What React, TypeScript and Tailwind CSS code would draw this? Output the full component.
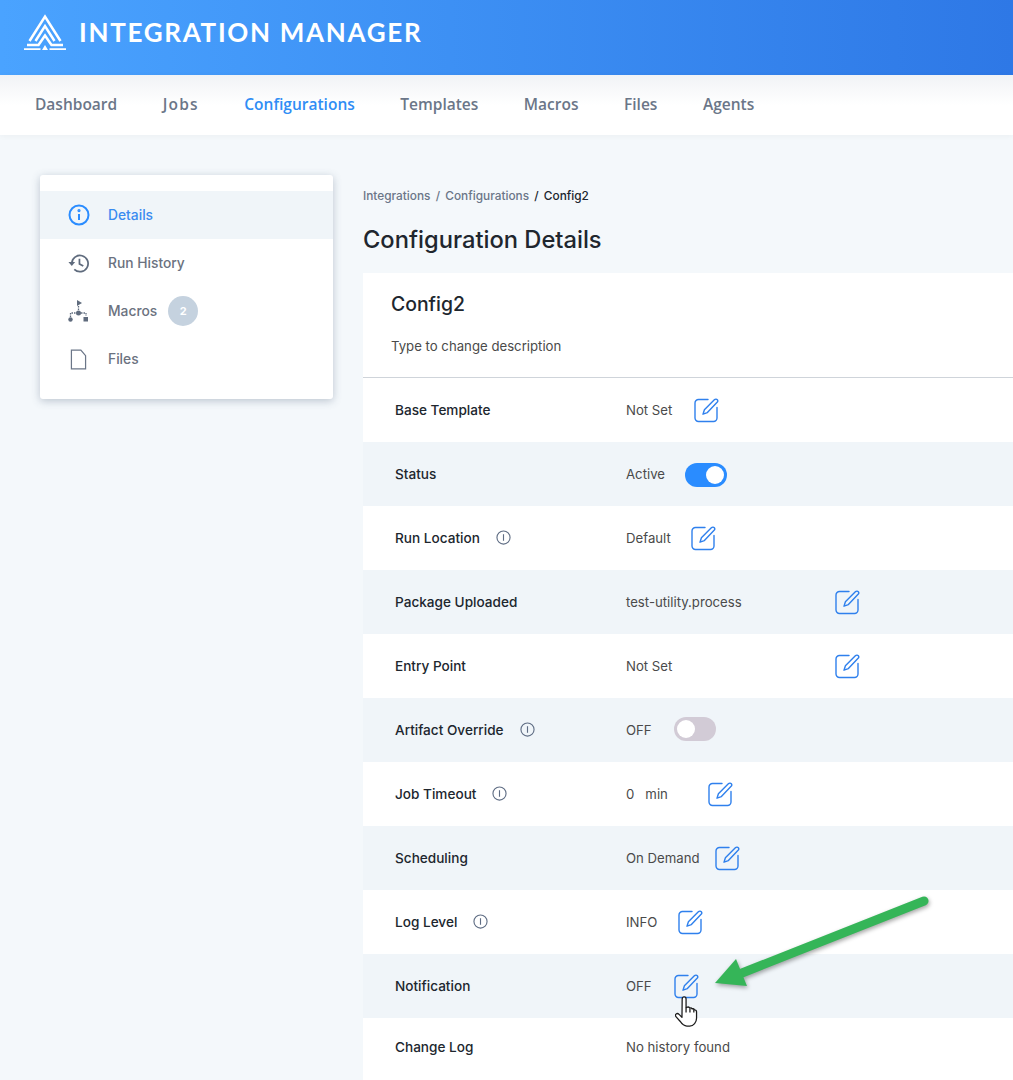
import { ReactNode } from 'react';

const EditIcon = ({ className = '' }: { className?: string }) => (
  <button className={`block w-[25px] h-[25px] shrink-0 ${className}`} aria-label="Edit">
    <svg viewBox="0 0 25 25" width="25" height="25" fill="none" stroke="#2f80ed" strokeWidth="1.4" strokeLinejoin="round" strokeLinecap="round">
      <path d="M14 1.5H4.5a3.5 3.5 0 0 0-3.5 3.5v15a3.5 3.5 0 0 0 3.5 3.5h15a3.5 3.5 0 0 0 3.5-3.5V9.5" />
      <path d="M20.6 1.6c.8-.7 2-.6 2.7.2.6.7.5 1.8-.2 2.5L13.4 14.6 9 16.2l1.4-4.4z" />
    </svg>
  </button>
);

const InfoDot = () => (
  <svg viewBox="0 0 16 16" width="15" height="15" fill="none" stroke="#5f6d84" strokeWidth="1.2" className="ml-[16px] shrink-0">
    <circle cx="8" cy="8" r="7" />
    <path d="M8 4.5v7" />
  </svg>
);

const Toggle = ({ on, className = '' }: { on: boolean; className?: string }) => (
  <div className={`w-[42px] h-6 rounded-full p-[3px] flex ${on ? 'bg-[#2a8cff] justify-end' : 'bg-[#d2cbd6] justify-start'} ${className}`}>
    <div className="w-[18px] h-[18px] rounded-full bg-white" />
  </div>
);

const Row = ({ label, info, shaded, h = 'h-16', children }: { label: string; info?: boolean; shaded?: boolean; h?: string; children: ReactNode }) => (
  <div className={`${h} flex items-center pl-8 ${shaded ? 'bg-[#f0f5f9]' : 'bg-white'}`}>
    <div className="w-[231px] shrink-0 flex items-center text-[13.6px] font-medium text-[#20262e]">
      {label}
      {info && <InfoDot />}
    </div>
    <div className="mt-[2px] flex items-center text-[13.2px] text-[#4a4a4a]">{children}</div>
  </div>
);

const SideItem = ({ icon, label, active, badge }: { icon: ReactNode; label: string; active?: boolean; badge?: string }) => (
  <div className={`h-12 flex items-center pl-[27px] ${active ? 'bg-[#f0f5f9]' : ''}`}>
    <div className="w-[23px] h-6 flex items-center justify-center shrink-0">{icon}</div>
    <span className={`ml-[18px] text-[13.8px] font-medium ${active ? 'text-[#3a8bf0]' : 'text-[#6b7280]'}`}>{label}</span>
    {badge && (
      <span className="ml-[11px] w-[30px] h-[30px] rounded-full bg-[#c5d2df] text-white text-[11px] font-bold flex items-center justify-center">{badge}</span>
    )}
  </div>
);

export default function App() {
  const nav = ['Dashboard', 'Jobs', 'Configurations', 'Templates', 'Macros', 'Files', 'Agents'];

  return (
    <div className="relative w-[1013px] h-[1080px] overflow-hidden bg-[#f4f8fb] font-['Inter','Noto_Sans',sans-serif]">
      {/* header */}
      <header className="h-[75px] flex items-start pt-[14px] pl-6 bg-gradient-to-r from-[#4aa3ff] to-[#2e78e6]">
        <svg viewBox="0 0 42 36" width="42" height="36" fill="none" stroke="#fff" strokeWidth="2.5" className="shrink-0">
          <path d="M5.5 27L21 2.5 36.5 27" />
          <path d="M11.5 27L21 12l9.5 15" />
          <path d="M3 31h11.5L21 21.5 27.5 31H39" />
          <path d="M0 35.5h16.5" />
          <path d="M25.5 35.5H42" />
          <path d="M18 36l3-5 3 5z" fill="#fff" stroke="none" />
        </svg>
        <div className="ml-[13px] mt-[4px] text-[26px] font-bold tracking-[1.7px] text-white font-['Lato',sans-serif] leading-7">INTEGRATION MANAGER</div>
      </header>

      {/* nav */}
      <nav className="h-[60px] flex items-center gap-[45.5px] pl-[35px] bg-gradient-to-b from-[#f1f3f6] to-white to-50% shadow-[0_1px_6px_rgba(0,0,0,0.04)]">
        {nav.map(item => (
          <span key={item} className={`text-[15.5px] font-semibold font-['Open_Sans',sans-serif] ${item === 'Configurations' ? 'text-[#2f8df5]' : 'text-[#6b7688]'} ${item === 'Jobs' ? 'tracking-[1.2px]' : ''}`}>{item}</span>
        ))}
      </nav>

      <div className="flex items-start pt-10 pl-10">
        {/* sidebar */}
        <aside className="w-[293px] h-[224px] py-4 bg-white rounded-[3px] shadow-[0_2px_8px_rgba(60,80,110,0.3)] shrink-0">
          <SideItem
            active
            label="Details"
            icon={
              <svg viewBox="0 0 22 22" width="22" height="22" fill="none" stroke="#2a8cff" strokeWidth="2">
                <circle cx="11" cy="11" r="9.5" />
                <path d="M11 10v6" />
                <circle cx="11" cy="6.6" r=".6" fill="#2a8cff" />
              </svg>
            }
          />
          <SideItem
            label="Run History"
            icon={
              <svg viewBox="0 0 24 24" width="23" height="23" fill="none" stroke="#5f6b7d" strokeWidth="1.8">
                <path d="M5 12a8.5 8.5 0 1 1 2.6 6.2" />
                <path d="M1.5 10.5h7L5 14.5z" fill="#5f6b7d" stroke="none" />
                <path d="M13 7v5.5l4 2.2" />
              </svg>
            }
          />
          <SideItem
            label="Macros"
            badge="2"
            icon={
              <svg viewBox="0 0 22 22" width="22" height="22" fill="#5f6b7d">
                <path d="M9 0l5 3-5 3z" />
                <circle cx="10.5" cy="13" r="2.5" />
                <circle cx="2.5" cy="19.5" r="2.2" />
                <rect x="15.5" y="17" width="4.5" height="4.5" />
                <path d="M10.5 6v4M2.5 17v-4H8M13 13h5v3" stroke="#5f6b7d" strokeWidth="1.3" strokeDasharray="1.5 1" fill="none" />
              </svg>
            }
          />
          <SideItem
            label="Files"
            icon={
              <svg viewBox="0 0 18 22" width="17" height="21" fill="none" stroke="#6b7688" strokeWidth="1.3">
                <path d="M1.5 1h10l5 6v14h-15z" />
              </svg>
            }
          />
        </aside>

        {/* main */}
        <main className="ml-[30px] w-[650px] shrink-0">
          <div className="mt-[13px] text-[11.85px] font-medium text-[#6b7688]">
            Integrations <span className="mx-[2px]">/</span> Configurations <span className="mx-[2px] text-[#20262e]">/</span> <span className="text-[#20262e]">Config2</span>
          </div>
          <h1 className="mt-[20px] text-[23.7px] leading-7 font-medium text-[#20262e]">Configuration Details</h1>

          <section className="mt-[19px] pb-[10px] bg-white">
            <div className="h-[105px] pl-7 pt-[19px] border-b border-[#cfd4da]">
              <div className="text-[19.4px] leading-6 font-medium text-[#20262e]">Config2</div>
              <div className="mt-[21px] text-[13.2px] text-[#4a4a4a]">Type to change description</div>
            </div>
            <Row label="Base Template">
              <span>Not Set</span>
              <EditIcon className="ml-[22px]" />
            </Row>
            <Row label="Status" shaded>
              <span>Active</span>
              <Toggle on className="ml-[20px]" />
            </Row>
            <Row label="Run Location" info>
              <span>Default</span>
              <EditIcon className="ml-[20px]" />
            </Row>
            <Row label="Package Uploaded" shaded>
              <span className="w-[209px]">test-utility.process</span>
              <EditIcon />
            </Row>
            <Row label="Entry Point">
              <span className="w-[209px]">Not Set</span>
              <EditIcon />
            </Row>
            <Row label="Artifact Override" info shaded>
              <span>OFF</span>
              <Toggle on={false} className="ml-[22px] -mt-[4px]" />
            </Row>
            <Row label="Job Timeout" info>
              <span>0</span>
              <span className="ml-[11px]">min</span>
              <EditIcon className="ml-[40px]" />
            </Row>
            <Row label="Scheduling" shaded>
              <span>On Demand</span>
              <EditIcon className="ml-[15px]" />
            </Row>
            <Row label="Log Level" info>
              <span>INFO</span>
              <EditIcon className="ml-[21px]" />
            </Row>
            <Row label="Notification" shaded>
              <span>OFF</span>
              <EditIcon className="ml-[22px]" />
            </Row>
            <Row label="Change Log" h="h-[58px]">
              <span>No history found</span>
            </Row>
          </section>
        </main>
      </div>

      {/* annotation arrow */}
      <svg className="absolute left-[700px] top-[885px] drop-shadow-[1px_2px_2px_rgba(0,0,0,0.35)]" width="240" height="110" viewBox="0 0 240 110" fill="none">
        <path d="M224 16L42 88" stroke="#35b558" strokeWidth="9" strokeLinecap="round" />
        <path d="M15 98L36 74l11 27z" fill="#35b558" />
      </svg>

      {/* hand cursor */}
      <svg className="absolute left-[675px] top-[995px]" width="26" height="33" viewBox="0 0 26 34" fill="#fff" stroke="#1a1a1a" strokeWidth="1.3" strokeLinejoin="round">
        <path d="M7 4a2 2 0 0 1 4 0v9l1.5-.5c1-.3 2 .2 2.3 1 .9-.4 2-.1 2.4.8 1-.3 2 .1 2.4 1 1.2 0 2.2.8 2.2 2V24c0 4-3 8-7 8h-3c-3 0-5-2-7-5l-4-4.5c-1-1-1-2.3 0-3 1-.7 2.2-.3 3 .5l3 3z" />
        <path d="M11 13v5M15 14v4M19 15v3" fill="none" />
      </svg>
    </div>
  );
}
